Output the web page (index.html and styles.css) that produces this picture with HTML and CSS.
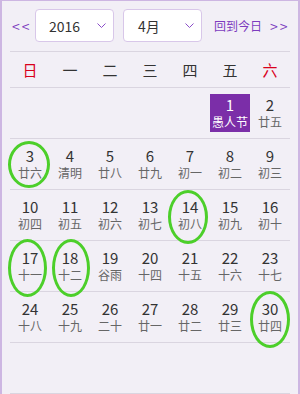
FILE: index.html
```html
<!DOCTYPE html>
<html>
<head>
<meta charset="utf-8">
<title>Calendar</title>
<link rel="stylesheet" href="styles.css">
</head>
<body>
<div class="toolbar">
    <span class="nav prev">&lt;&lt;</span>
    <div class="picker year"><span>2016</span><svg width="9" height="5" viewBox="0 0 9 5"><polyline points="0.5,0.5 4.5,4.5 8.5,0.5" /></svg></div>
    <div class="picker month"><span>4月</span><svg width="9" height="5" viewBox="0 0 9 5"><polyline points="0.5,0.5 4.5,4.5 8.5,0.5" /></svg></div>
    <span class="today">回到今日</span>
    <span class="nav next">&gt;&gt;</span>
</div>

<div class="weekdays">
    <span class="weekend">日</span><span>一</span><span>二</span><span>三</span><span>四</span><span>五</span><span class="weekend">六</span>
</div>

<div class="week">
    <div class="day"></div><div class="day"></div><div class="day"></div><div class="day"></div><div class="day"></div>
    <div class="day selected"><div class="box"><span class="num">1</span><span class="lunar">愚人节</span></div></div>
    <div class="day"><div class="box"><span class="num">2</span><span class="lunar">廿五</span></div></div>
</div>
<div class="week">
    <div class="day"><div class="box"><span class="num">3</span><span class="lunar">廿六</span></div><i class="mark m3"></i></div>
    <div class="day"><div class="box"><span class="num">4</span><span class="lunar">清明</span></div></div>
    <div class="day"><div class="box"><span class="num">5</span><span class="lunar">廿八</span></div></div>
    <div class="day"><div class="box"><span class="num">6</span><span class="lunar">廿九</span></div></div>
    <div class="day"><div class="box"><span class="num">7</span><span class="lunar">初一</span></div></div>
    <div class="day"><div class="box"><span class="num">8</span><span class="lunar">初二</span></div></div>
    <div class="day"><div class="box"><span class="num">9</span><span class="lunar">初三</span></div></div>
</div>
<div class="week">
    <div class="day"><div class="box"><span class="num">10</span><span class="lunar">初四</span></div></div>
    <div class="day"><div class="box"><span class="num">11</span><span class="lunar">初五</span></div></div>
    <div class="day"><div class="box"><span class="num">12</span><span class="lunar">初六</span></div></div>
    <div class="day"><div class="box"><span class="num">13</span><span class="lunar">初七</span></div></div>
    <div class="day"><div class="box"><span class="num">14</span><span class="lunar">初八</span></div><i class="mark m14"></i></div>
    <div class="day"><div class="box"><span class="num">15</span><span class="lunar">初九</span></div></div>
    <div class="day"><div class="box"><span class="num">16</span><span class="lunar">初十</span></div></div>
</div>
<div class="week">
    <div class="day"><div class="box"><span class="num">17</span><span class="lunar">十一</span></div><i class="mark m17"></i></div>
    <div class="day"><div class="box"><span class="num">18</span><span class="lunar">十二</span></div><i class="mark m18"></i></div>
    <div class="day"><div class="box"><span class="num">19</span><span class="lunar">谷雨</span></div></div>
    <div class="day"><div class="box"><span class="num">20</span><span class="lunar">十四</span></div></div>
    <div class="day"><div class="box"><span class="num">21</span><span class="lunar">十五</span></div></div>
    <div class="day"><div class="box"><span class="num">22</span><span class="lunar">十六</span></div></div>
    <div class="day"><div class="box"><span class="num">23</span><span class="lunar">十七</span></div></div>
</div>
<div class="week">
    <div class="day"><div class="box"><span class="num">24</span><span class="lunar">十八</span></div></div>
    <div class="day"><div class="box"><span class="num">25</span><span class="lunar">十九</span></div></div>
    <div class="day"><div class="box"><span class="num">26</span><span class="lunar">二十</span></div></div>
    <div class="day"><div class="box"><span class="num">27</span><span class="lunar">廿一</span></div></div>
    <div class="day"><div class="box"><span class="num">28</span><span class="lunar">廿二</span></div></div>
    <div class="day"><div class="box"><span class="num">29</span><span class="lunar">廿三</span></div></div>
    <div class="day"><div class="box"><span class="num">30</span><span class="lunar">廿四</span></div><i class="mark m30"></i></div>
</div>
<div class="week"></div>
</body>
</html>
```

FILE: styles.css
```css
body {
    margin: 0;
    width: 300px;
    height: 394px;
    box-sizing: border-box;
    border: 1px solid #cdb6e2;
    border-width: 1px 2px 0 2px;
    padding: 8px 8px 0 8px;
    background-color: #f2eff6;
    font-family: "Noto Sans CJK SC", sans-serif;
    color: #333;
    overflow: hidden;
}

/* top bar */
.toolbar {
    display: flex;
    align-items: center;
    height: 33px;
}
.nav {
    color: #7d3cbf;
    font-size: 14px;
    letter-spacing: 2px;
}
.prev {
    width: 25px;
    padding-left: 2px;
    box-sizing: border-box;
}
.next {
    margin-left: 8px;
}
.picker {
    width: 79px;
    height: 33px;
    box-sizing: border-box;
    border: 1px solid #d8c7e9;
    border-radius: 4px;
    background-color: white;
    display: flex;
    align-items: center;
    justify-content: space-between;
    padding: 0 7px 0 13px;
    font-size: 14px;
}
.picker polyline {
    fill: none;
    stroke: #8a4cc8;
    stroke-width: 1;
}
.month {
    margin-left: 9px;
    padding-left: 14px;
}
.today {
    margin-left: 12px;
    color: #7d3cbf;
    font-size: 12px;
}

/* grid */
.weekdays {
    margin-top: 9px;
    height: 35px;
    border-top: 1px solid #dad5e0;
    border-bottom: 1px solid #dad5e0;
    display: grid;
    grid-template-columns: repeat(7, 40px);
    align-items: center;
    text-align: center;
    font-size: 15px;
}
.weekend {
    color: #d9001b;
}
.week {
    display: grid;
    grid-template-columns: repeat(7, 40px);
    height: 50px;
    border-bottom: 1px solid #dad5e0;
}
.day {
    position: relative;
}
.box {
    margin-top: 6px;
    height: 38px;
    display: flex;
    flex-direction: column;
    align-items: center;
    justify-content: center;
}
.num {
    font-size: 15px;
    line-height: 18px;
}
.lunar {
    font-size: 12px;
    line-height: 16px;
    color: #666;
}
.selected .box {
    background-color: #7b2ea8;
}
.selected .num,
.selected .lunar {
    color: white;
}

/* hand drawn marks */
.mark {
    position: absolute;
    box-sizing: border-box;
    border: 3px solid #4ccf2a;
    border-radius: 50%;
}
.m3 {
    left: -2px;
    top: 2px;
    width: 42px;
    height: 47px;
}
.m14 {
    left: -2px;
    top: 0;
    width: 40px;
    height: 54px;
}
.m17 {
    left: -2px;
    top: -2px;
    width: 39px;
    height: 58px;
}
.m18 {
    left: 2px;
    top: -2px;
    width: 38px;
    height: 58px;
}
.m30 {
    left: 0;
    top: -1px;
    width: 40px;
    height: 57px;
}
```
